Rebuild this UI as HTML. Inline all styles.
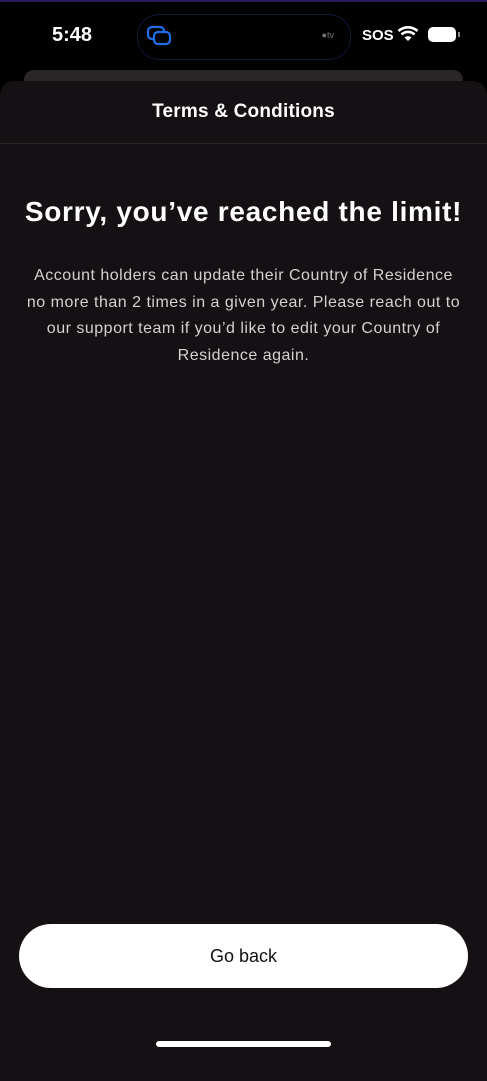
<!DOCTYPE html>
<html><head><meta charset="utf-8"><style>
html,body{margin:0;padding:0;}
body{width:487px;height:1051px;background:#000;position:relative;overflow:hidden;font-family:"Liberation Sans",sans-serif;color:#fff;}
.topline{position:absolute;top:0;left:0;width:487px;height:2px;background:#2a1a5a;}
.time{position:absolute;left:52px;top:24px;font-size:20px;font-weight:bold;}
.island{position:absolute;left:137px;top:14px;width:212px;height:44px;border-radius:22px;background:#000;border:1px solid #0e1a3a;}
.sos{position:absolute;left:362px;top:27px;font-size:15px;font-weight:bold;}
.card2{position:absolute;left:24px;top:70px;width:439px;height:40px;border-radius:10px;background:#2a2628;}
.sheet{position:absolute;left:0;top:81px;width:487px;height:1000px;border-radius:14px 14px 0 0;background:#141013;}
.title{position:absolute;top:101px;width:487px;text-align:center;font-size:19px;font-weight:bold;letter-spacing:0.2px;}
.hr{position:absolute;top:143px;left:0;width:487px;height:1px;background:#2a2628;}
h1{position:absolute;top:196px;margin:0;width:487px;text-align:center;font-size:28px;font-weight:bold;letter-spacing:0.7px;white-space:nowrap;}
p{position:absolute;top:263px;left:0;width:487px;margin:0;text-align:center;font-size:16px;line-height:26.5px;color:#d4d0d2;letter-spacing:0.5px;white-space:nowrap;}
.btn{position:absolute;left:19px;top:924px;width:449px;height:64px;border-radius:32px;background:#fff;color:#111;text-align:center;line-height:64px;font-size:18px;}
.home{position:absolute;left:156px;top:1041px;width:175px;height:6px;border-radius:3px;background:#fff;}
</style></head><body>
<div class="topline"></div>
<div class="time">5:48</div>
<div class="island">
<svg width="40" height="30" style="position:absolute;left:8px;top:9px" fill="none" stroke="#1e6ee8" stroke-width="2.2"><rect x="2" y="3" width="16" height="12" rx="4"/><rect x="8" y="8" width="16" height="12" rx="4" fill="#000"/></svg>
<span style="position:absolute;right:16px;top:15px;font-size:9px;color:#777">●tv</span>
</div>
<div class="sos">SOS</div>
<svg style="position:absolute;left:397px;top:25px" width="22" height="18" viewBox="0 0 22 18"><path d="M11 16 L7.5 12.5 A5 5 0 0 1 14.5 12.5 Z" fill="#fff"/><path d="M4.5 9.5 A9.5 9.5 0 0 1 17.5 9.5" stroke="#fff" stroke-width="2.6" fill="none"/><path d="M1.5 6 A14 14 0 0 1 20.5 6" stroke="#fff" stroke-width="2.6" fill="none"/></svg>
<div style="position:absolute;left:428px;top:27px;width:28px;height:15px;border-radius:5px;background:#fff;"></div>
<div style="position:absolute;left:458px;top:32px;width:2px;height:5px;background:#888;"></div>
<div class="card2"></div>
<div class="sheet"></div>
<div class="title">Terms &amp; Conditions</div>
<div class="hr"></div>
<h1>Sorry, you’ve reached the limit!</h1>
<p>Account holders can update their Country of Residence<br>no more than 2 times in a given year. Please reach out to<br>our support team if you’d like to edit your Country of<br>Residence again.</p>
<div class="btn">Go back</div>
<div class="home"></div>
</body></html>
